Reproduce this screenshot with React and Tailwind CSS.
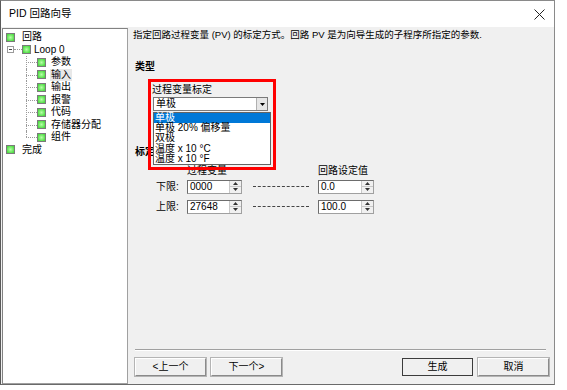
import React from 'react';

const font = { fontFamily: '"Liberation Sans", "Noto Sans CJK SC", sans-serif' };

// green node square used by the tree
const Node = () => (
  <span className="inline-block w-[9px] h-[9px] shrink-0 border border-[#7a7a7a] bg-[radial-gradient(circle,#b8ffa8_0%,#4fdc44_80%)]" />
);

const Child = ({ label, last, active }) => (
  <div className="flex items-center h-[12.5px] pl-[23px]">
    <div className="relative w-[11px] h-full shrink-0">
      <div className={`absolute left-0 top-0 border-l border-dotted border-[#9a9a9a] ${last ? 'h-1/2' : 'h-full'}`} />
      <div className="absolute left-0 right-0 top-1/2 border-t border-dotted border-[#9a9a9a]" />
    </div>
    <Node />
    <span className={`ml-[4px] px-[1px] leading-[12px] ${active ? 'bg-[#e8e8e8]' : ''}`}>{label}</span>
  </div>
);

const Arrow = ({ up }) => (
  <svg width="5" height="3" viewBox="0 0 5 3">
    <path d={up ? 'M0 3h5L2.5 0z' : 'M0 0h5L2.5 3z'} fill="#333" />
  </svg>
);

const Spin = ({ value, w }) => (
  <div className={`flex h-[14px] ${w} bg-white border border-[#a0a0a0] border-t-[#6d6d6d] border-l-[#6d6d6d]`}>
    <div className="flex-1 pl-[2px] leading-[12px]">{value}</div>
    <div className="flex flex-col w-[12px] border-l border-[#c8c8c8]">
      <div className="flex-1 flex items-center justify-center bg-[#f0f0f0] border-b border-[#c8c8c8]"><Arrow up /></div>
      <div className="flex-1 flex items-center justify-center bg-[#f0f0f0]"><Arrow /></div>
    </div>
  </div>
);

const Button = ({ children, main }) => (
  <button className={`w-[71px] h-[18px] text-[10px] leading-[14px] bg-[#f0f0f0] border ${main ? 'border-[#3c3c3c]' : 'border-t-white border-l-white border-r-[#8a8a8a] border-b-[#8a8a8a] shadow-[0_0_0_1px_#b4b4b4]'}`}>
    {children}
  </button>
);

export default function App() {
  const items = ['单极', '单极 20% 偏移量', '双极', '温度 x 10 °C', '温度 x 10 °F'];
  return (
    <div className="w-[567px] h-[390px] bg-white text-[10px] text-black overflow-hidden" style={font}>
      <div className="w-[555px] h-[385px] flex flex-col border border-[#8a8a8a] border-l-[#5a5a5a] border-b-[#6a6a6a]">
        {/* title bar */}
        <div className="h-[26px] bg-white flex items-center justify-between pl-[8px] pr-[6px]">
          <span className="text-[10.5px]">PID 回路向导</span>
          <svg width="11" height="11" viewBox="0 0 11 11" className="mr-[3px]">
            <path d="M0.5 0.5L10.5 10.5M10.5 0.5L0.5 10.5" stroke="#222" strokeWidth="1" />
          </svg>
        </div>

        <div className="flex-1 flex bg-[#f0f0f0]">
          {/* tree */}
          <div className="ml-[1px] mt-[1px] w-[126px] bg-white border border-[#a0a0a0] border-t-[#828282] border-l-[#828282] pt-[2px]">
            <div className="flex items-center h-[12.5px] pl-[3px]">
              <Node />
              <span className="ml-[7px] leading-[12px]">回路</span>
            </div>
            <div className="flex items-center h-[12.5px] pl-[4px]">
              <span className="flex items-center justify-center w-[7px] h-[7px] border border-[#9a9a9a] bg-white shrink-0">
                <span className="w-[3px] border-t border-[#444]" />
              </span>
              <span className="w-[8px] border-t border-dotted border-[#9a9a9a]" />
              <Node />
              <span className="ml-[3px] leading-[12px]">Loop 0</span>
            </div>
            <Child label="参数" />
            <Child label="输入" active />
            <Child label="输出" />
            <Child label="报警" />
            <Child label="代码" />
            <Child label="存储器分配" />
            <Child label="组件" last />
            <div className="flex items-center h-[12.5px] pl-[3px]">
              <Node />
              <span className="ml-[7px] leading-[12px]">完成</span>
            </div>
          </div>

          {/* content */}
          <div className="flex-1 flex flex-col pl-[5px] pr-[5px] pb-[8px]">
            <div className="mt-[2px] h-[12px] leading-[12px] text-[9.5px]">指定回路过程变量 (PV) 的标定方式。回路 PV 是为向导生成的子程序所指定的参数.</div>
            <div className="mt-[20px] h-[12px] leading-[12px] ml-[2px] font-bold">类型</div>

            <div className="relative ml-[20px] mt-[11px] w-[115px]">
              <div className="h-[12px] leading-[12px] -ml-px">过程变量标定</div>
              <div className="mt-[1px] h-[14px] flex bg-white border border-[#7a7a7a]">
                <div className="flex-1 pl-[2px] leading-[12px]">单极</div>
                <div className="w-[11px] flex items-center justify-center bg-[#e6e6e6] border-l border-[#b0b0b0]">
                  <svg width="5" height="3" viewBox="0 0 5 3"><path d="M0 0h5L2.5 3z" fill="#000" /></svg>
                </div>
              </div>
              {/* open dropdown list */}
              <div className="absolute z-10 left-0 top-[28px] w-[118px] h-[53px] bg-white border border-[#646464]">
                {items.map((t, i) => (
                  <div key={t} className={`h-[10.2px] leading-[10px] pl-[1px] ${i === 0 ? 'bg-[#0078d7] text-white' : ''}`}>{t}</div>
                ))}
              </div>
              {/* red annotation frame */}
              <div className="absolute z-20 -left-[5px] -top-[5px] w-[128px] h-[91px] border-[3px] border-[#ff0000]" />
            </div>

            <div className="mt-[35px] h-[12px] leading-[12px] ml-[2px] font-bold">标定</div>
            <div className="mt-[7px] h-[12px] leading-[12px] flex pl-[54px]">
              <span className="w-[131px]">过程变量</span>
              <span>回路设定值</span>
            </div>
            <div className="mt-[2px] flex items-center pl-[23px]">
              <span className="w-[31px]">下限:</span>
              <Spin value="0000" w="w-[55px]" />
              <div className="ml-[11px] w-[56px] border-t border-dashed border-[#444]" />
              <div className="ml-[9px]"><Spin value="0.0" w="w-[56px]" /></div>
            </div>
            <div className="mt-[5px] flex items-center pl-[23px]">
              <span className="w-[31px]">上限:</span>
              <Spin value="27648" w="w-[55px]" />
              <div className="ml-[11px] w-[56px] border-t border-dashed border-[#444]" />
              <div className="ml-[9px]"><Spin value="100.0" w="w-[56px]" /></div>
            </div>

            <div className="flex-1" />
            <div className="ml-[2px] mr-[3px] border-t border-[#a0a0a0] border-b border-b-white" />
            <div className="mt-[7px] flex ml-[2px] gap-[5px]">
              <Button>&lt;上一个</Button>
              <Button>下一个&gt;</Button>
              <div className="flex-1" />
              <Button main>生成</Button>
              <Button>取消</Button>
            </div>
          </div>
        </div>
      </div>
    </div>
  );
}
